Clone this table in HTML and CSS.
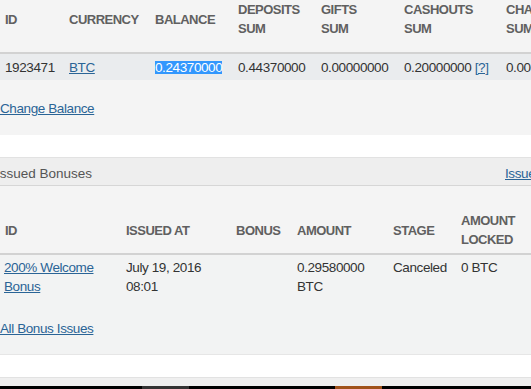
FILE: index.html
```html
<!DOCTYPE html>
<html lang="en">
<head>
<meta charset="utf-8">
<title>Player balances</title>
<link rel="stylesheet" href="styles.css">
</head>
<body>
<div class="page">
  <section class="panel">
    <table class="grid grid-balances">
      <colgroup>
        <col class="c-id"><col class="c-cur"><col class="c-num"><col class="c-num"><col class="c-num"><col class="c-cash"><col class="c-num">
      </colgroup>
      <thead>
        <tr>
          <th>ID</th>
          <th>Currency</th>
          <th>Balance</th>
          <th>Deposits<br>Sum</th>
          <th>Gifts<br>Sum</th>
          <th>Cashouts<br>Sum</th>
          <th>Chargebacks<br>Sum</th>
        </tr>
      </thead>
      <tbody>
        <tr>
          <td>1923471</td>
          <td><a href="#">BTC</a></td>
          <td><span class="selected">0.24370000</span></td>
          <td>0.44370000</td>
          <td>0.00000000</td>
          <td>0.20000000 <a href="#">[?]</a></td>
          <td>0.00000000</td>
        </tr>
      </tbody>
    </table>
    <div class="panel-actions"><a href="#">Change Balance</a></div>
  </section>

  <section class="panel">
    <header class="panel-heading">
      <h3 class="panel-title">Issued Bonuses</h3>
      <a href="#">Issue Bonus</a>
    </header>
    <table class="grid grid-bonuses">
      <colgroup>
        <col class="b-id"><col class="b-at"><col class="b-bonus"><col class="b-amount"><col class="b-stage"><col class="b-locked">
      </colgroup>
      <thead>
        <tr>
          <th>ID</th>
          <th>Issued at</th>
          <th>Bonus</th>
          <th>Amount</th>
          <th>Stage</th>
          <th>Amount<br>Locked</th>
        </tr>
      </thead>
      <tbody>
        <tr>
          <td><a href="#">200% Welcome Bonus</a></td>
          <td>July 19, 2016 08:01</td>
          <td></td>
          <td>0.29580000 BTC</td>
          <td>Canceled</td>
          <td>0 BTC</td>
        </tr>
      </tbody>
    </table>
    <div class="panel-actions panel-actions-tinted"><a href="#">All Bonus Issues</a></div>
  </section>

  <div class="footer-strip"></div>
  <div class="taskbar">
    <span class="task task-dark"></span>
    <span class="task task-orange"></span>
  </div>
</div>
</body>
</html>
```

FILE: styles.css
```css
html, body {
  margin: 0;
  padding: 0;
  background: #fff;
  overflow: hidden;
}

body {
  font-family: "Liberation Sans", Arial, sans-serif;
  font-size: 13.5px;
  letter-spacing: -0.4px;
  line-height: 19px;
  color: #333;
}

a {
  color: #2a6496;
  text-decoration: underline;
}

.page {
  width: 620px;
}

/* panels */
.panel {
  background: #f4f4f4;
}

.panel + .panel {
  margin-top: 22px;
  border-bottom: 1px solid #e6e6e6;
}

.panel-heading {
  display: flex;
  align-items: center;
  background: #eeeeee;
  border-top: 1px solid #e2e2e2;
  border-bottom: 1px solid #d6d6d6;
  padding: 6px 0 2px;
}

.panel-title {
  flex: 0 0 509px;
  margin: 0 0 0 -4px;
  font-size: 13.5px;
  font-weight: normal;
  letter-spacing: 0;
  color: #555;
}

.panel-actions {
  padding: 19px 0 17px;
}

.panel-actions-tinted {
  background: #f2f3f3;
  padding: 20px 0 16px;
}

/* tables */
.grid {
  table-layout: fixed;
  border-collapse: collapse;
}

.grid th {
  text-align: left;
  vertical-align: middle;
  font-size: 13px;
  font-weight: bold;
  letter-spacing: -0.5px;
  text-transform: uppercase;
  color: #606060;
  border-bottom: 2px solid #d2d2d2;
}

.grid td {
  text-align: left;
  vertical-align: top;
}

.grid-balances {
  width: 584px;
}

.grid-balances th {
  padding: 0 5px 14px;
}

.grid-balances thead tr {
  height: 53px;
}

.grid-balances td {
  padding: 4px 5px 3px;
  white-space: nowrap;
  background: #eaecee;
}

.c-id { width: 64px; }
.c-cur { width: 86px; }
.c-num { width: 83px; }
.c-cash { width: 102px; }

.grid-bonuses {
  width: 556px;
  margin-top: 21px;
}

.grid-bonuses th {
  padding: 4px 5px 4px;
}

.grid-bonuses td {
  padding: 3px 5px;
  background: #f2f3f3;
}

.grid-bonuses td:first-child {
  padding-left: 4px;
}

.b-id { width: 121px; }
.b-at { width: 110px; }
.b-bonus { width: 61px; }
.b-amount { width: 96px; }
.b-stage { width: 68px; }
.b-locked { width: 100px; }

.selected {
  display: inline-block;
  line-height: 13px;
  background: #3297fd;
  color: #fff;
}

/* window bottom */
.footer-strip {
  margin-top: 22px;
  height: 8px;
  background: #efefef;
  border-top: 1px solid #e2e2e2;
}

.taskbar {
  display: flex;
  height: 10px;
  background: #000;
}

.task {
  width: 47px;
}

.task-dark {
  margin-left: 142px;
  background: #333;
}

.task-orange {
  margin-left: 146px;
  background: #a0521a;
}
```
